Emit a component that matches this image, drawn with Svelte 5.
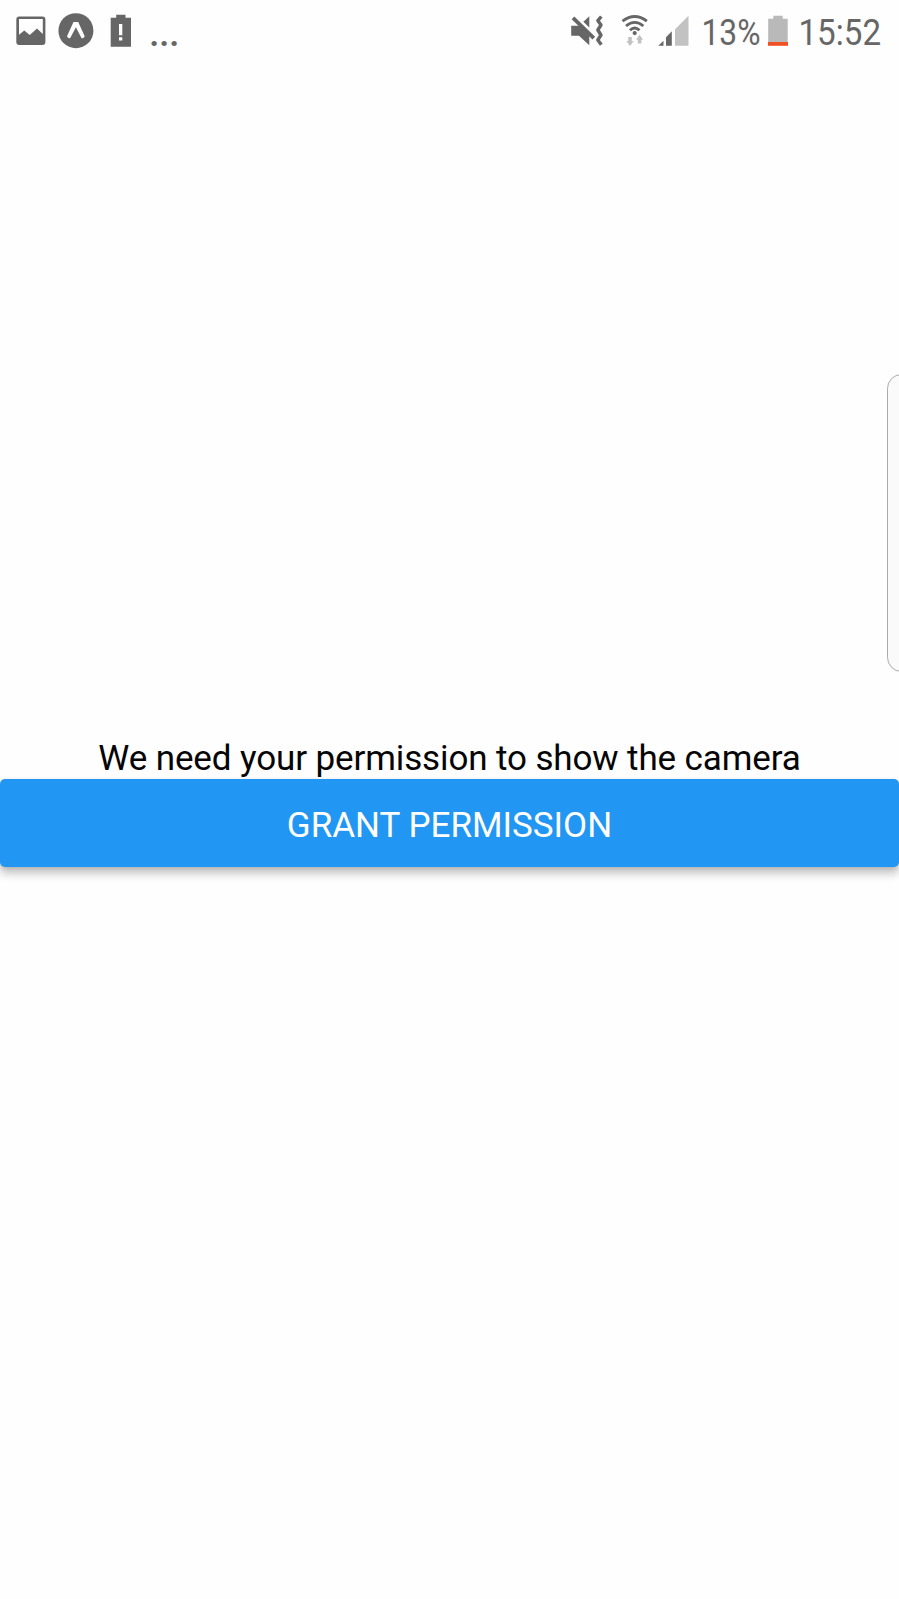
<script>
  const message = 'We need your permission to show the camera';
  const action = 'Grant Permission';
</script>

<div class="screen">
  <header class="status">
    <div class="group">
      <svg width="30" height="64" viewBox="16 0 30 64" aria-hidden="true">
        <path fill="#666" fill-rule="evenodd" d="M19.3 16.5H42.4Q45.4 16.5 45.4 19.5V42Q45.4 45 42.4 45H19.3Q16.3 45 16.3 42V19.5Q16.3 16.5 19.3 16.5ZM19 19V34.8L24.3 30.5L29.7 35L37 28.5L42.8 34V19Z" />
      </svg>
      <svg class="launcher" width="36" height="64" viewBox="58 0 36 64" aria-hidden="true">
        <circle cx="75.9" cy="30.7" r="17.5" fill="#666" />
        <path fill="#fff" d="M73.5 22H78.2L84.7 36.3Q83.7 38.8 81.6 38.2L75.9 27.2L70.1 38.2Q68 38.8 67 36.3Z" />
      </svg>
      <svg class="alert" width="22" height="64" viewBox="110 0 22 64" aria-hidden="true">
        <path fill="#666" d="M110.7 17.7H116.2V14.7H125.5V17.7H131V46.7H110.7Z" />
        <path fill="#fff" d="M119 24H122.3V35.2H119ZM119 37.3H122.3V40.6H119Z" />
      </svg>
      <span class="more">...</span>
    </div>
    <div class="group">
      <svg width="34" height="64" viewBox="570 0 34 64" aria-hidden="true">
        <path fill="#666" d="M571.2 25.8H580L589.3 34V45.2L579 35.7H571.2ZM589.3 16.3V27.6L583.4 21.8Z" />
        <path d="M573 17.8L593.8 38.2" stroke="#666" stroke-width="3.8" />
        <path d="M601.3 16.5L597.8 20.6L601 25L597.8 30L601 35L597.8 40L601.3 44.8" fill="none" stroke="#666" stroke-width="3.4" stroke-linejoin="round" />
      </svg>
      <svg class="wifi" width="28" height="64" viewBox="621 0 28 64" aria-hidden="true">
        <g fill="none" stroke="#666" stroke-width="2.8">
          <path d="M622.5 21.2Q634.7 11.9 646.9 21.2" />
          <path d="M626 26Q634.7 18.8 643.4 26" />
          <path d="M629.9 30.3Q634.7 25.8 639.5 30.3" />
        </g>
        <circle cx="634.7" cy="33.1" r="2.1" fill="#666" />
        <path fill="#c2c2c2" d="M628.2 37H631.8V41H633.7L630 46L626.4 41H628.2ZM637.8 43.5H641.4V39.8H643.1L639.6 34.8L636 39.8H637.8Z" />
      </svg>
      <svg class="signal" width="31" height="64" viewBox="658 0 31 64" aria-hidden="true">
        <path fill="#666" d="M658.3 45.8L663.5 40.8V45.8ZM666 45.8V37.3L671.8 31.3V45.8Z" />
        <path fill="#c2c2c2" d="M675 45.8V29.3L688.5 15.8V45.8Z" />
      </svg>
      <svg class="percent" width="68" height="64" viewBox="697 0 68 64">
        <text x="701.5" y="45" textLength="59" lengthAdjust="spacingAndGlyphs">13%</text>
      </svg>
      <svg class="battery" width="20" height="64" viewBox="768 0 20 64" aria-hidden="true">
        <path fill="#b9b9b9" d="M768.2 18.7H773.3V15.8H782.7V18.7H787.7V42H768.2Z" />
        <path fill="#f05022" d="M768 42H788V45.8H768Z" />
      </svg>
      <svg class="clock" width="94" height="64" viewBox="793 0 94 64">
        <text x="798.5" y="45" textLength="82.5" lengthAdjust="spacingAndGlyphs">15:52</text>
      </svg>
    </div>
  </header>

  <main>
    <p>{message}</p>
    <button type="button">{action}</button>
  </main>

  <div class="edge-handle"></div>
</div>

<style>
  :global(body) {
    margin: 0;
    background: #fefefe;
  }
  .screen {
    position: relative;
    display: flex;
    flex-direction: column;
    width: 899px;
    height: 1599px;
    overflow: hidden;
    background: #fefefe;
    font-family: Roboto, sans-serif;
  }
  .status {
    display: flex;
    justify-content: space-between;
    height: 64px;
    padding: 0 12px 0 16px;
    color: #666;
  }
  .group {
    display: flex;
  }
  svg {
    display: block;
    flex: none;
    overflow: visible;
  }
  svg text {
    font-family: Roboto, sans-serif;
    font-size: 37.5px;
    fill: #666;
  }
  .launcher { margin-left: 12px; }
  .alert { margin-left: 16px; }
  .more {
    margin-left: 17px;
    font-size: 38px;
    font-weight: 500;
    letter-spacing: -0.6px;
    line-height: 66px;
  }
  .wifi { margin-left: 17px; }
  .signal { margin-left: 9px; }
  .percent { margin-left: 8px; }
  .battery { margin-left: 3px; }
  .clock { margin-left: 5px; }
  main {
    display: flex;
    flex: 1;
    flex-direction: column;
    padding-top: 674px;
  }
  p {
    margin: 0;
    height: 41px;
    line-height: 42px;
    font-size: 35px;
    letter-spacing: -0.12px;
    text-align: center;
    white-space: nowrap;
    color: #050505;
  }
  button {
    height: 88px;
    padding: 5px 0 0;
    border: 0;
    border-radius: 5px;
    background: #2196f3;
    box-shadow: 0 7px 9px rgba(0, 0, 0, 0.22), 0 1px 4px rgba(0, 0, 0, 0.12);
    color: #fff;
    font: 400 35px/44px Roboto, sans-serif;
    text-transform: uppercase;
  }
  .edge-handle {
    position: absolute;
    top: 374px;
    right: -17px;
    box-sizing: border-box;
    width: 29px;
    height: 298px;
    border: 1.5px solid #aaa;
    border-radius: 16px;
    background: #fafafa;
  }
</style>
